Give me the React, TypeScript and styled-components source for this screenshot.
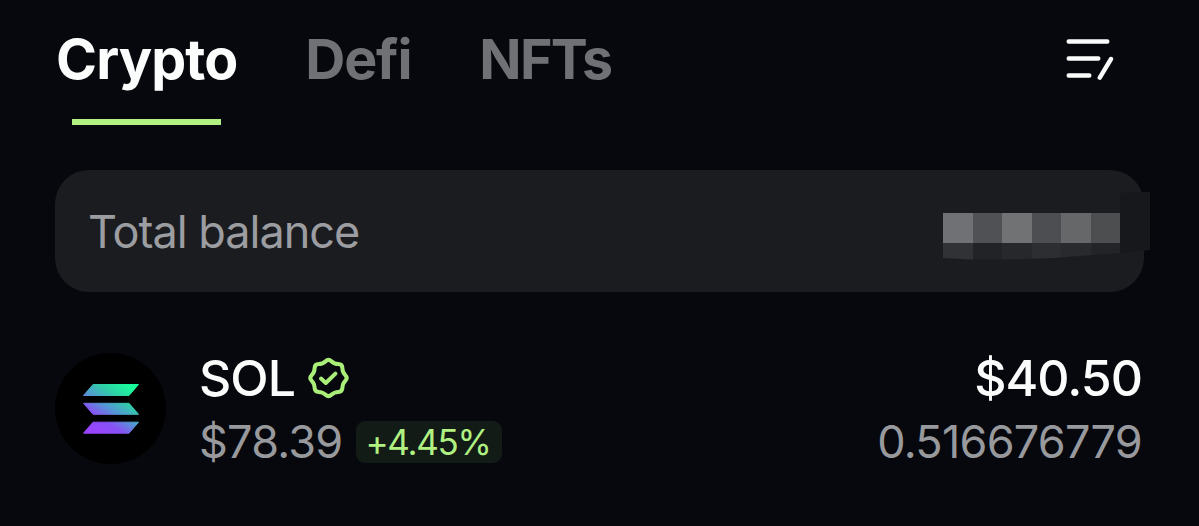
import React from 'react'
import styled, { createGlobalStyle } from 'styled-components'

const GlobalStyle = createGlobalStyle`
    * {
        box-sizing: border-box;
    }

    body {
        margin: 0;
        background-color: #06080d;
        font-family: Inter, sans-serif;
    }
`

const Container = styled.main`
    display: flex;
    flex-flow: column;
    height: 526px;
    padding: 29px 55px 0;
    overflow: hidden;
`

const Header = styled.header`
    display: flex;
    justify-content: space-between;
    height: 96px;
    padding: 0 30px 0 1px;
`

const Tabs = styled.nav`
    display: flex;
    gap: 68px;
`

const Tab = styled.button<{ $active?: boolean; $spacing: number }>`
    display: flex;
    flex-flow: column;
    align-items: center;
    justify-content: space-between;
    padding: 0;
    border: 0;
    background: none;
    color: ${({ $active }) => ($active ? '#fbfcfc' : '#707175')};
    font-family: inherit;
    font-size: 55.5px;
    font-weight: 700;
    line-height: 60px;
    letter-spacing: ${({ $spacing }) => $spacing}px;
    white-space: nowrap;
`

const Underline = styled.span`
    width: 149px;
    height: 6px;
    background-color: #b0f182;
`

const ManageButton = styled.button`
    align-self: flex-start;
    height: 48px;
    margin-top: 6px;
    padding: 0;
    border: 0;
    background: none;
`

const BalanceCard = styled.section`
    position: relative;
    display: flex;
    align-items: center;
    height: 122px;
    margin-top: 45px;
    padding: 0 33px;
    border-radius: 34px;
    background-color: #1b1c20;
`

const BalanceLabel = styled.span`
    padding-top: 2px;
    color: #9c9da1;
    font-size: 45px;
    line-height: 60px;
    letter-spacing: -1px;
`

const HiddenAmount = styled.div`
    position: absolute;
    top: 22px;
    right: -6px;
    display: grid;
    grid-template-columns: repeat(6, 29.5px) 30px;
    grid-template-rows: 21px 30px 17px;
    clip-path: polygon(0 21px, 177px 21px, 177px 1px, 207px 0, 207px 58px, 177px 61px, 110px 66px, 65px 67.5px, 28px 67.5px, 0 66px);
`

const Block = styled.span<{ $color: string; $tall?: boolean }>`
    grid-row: ${({ $tall }) => ($tall ? '1 / 4' : 'auto')};
    grid-column: ${({ $tall }) => ($tall ? '7' : 'auto')};
    background-color: ${({ $color }) => $color};
`

const AssetRow = styled.section`
    display: flex;
    align-items: center;
    height: 128px;
    margin-top: 54px;
`

const Coin = styled.div`
    display: flex;
    align-items: center;
    justify-content: center;
    width: 111px;
    height: 111px;
    margin-top: -3px;
    border-radius: 50%;
    background-color: #000;
`

const Column = styled.div<{ $end?: boolean }>`
    display: flex;
    flex-flow: column;
    align-items: ${({ $end }) => ($end ? 'flex-end' : 'flex-start')};
    margin-left: ${({ $end }) => ($end ? 'auto' : '33px')};
    margin-right: ${({ $end }) => ($end ? '2px' : '0')};
`

const Line = styled.div`
    display: flex;
    align-items: center;
    gap: 13px;
    height: 64px;
`

const Primary = styled.span`
    color: #fbfcfc;
    font-size: 50px;
    font-weight: 500;
    line-height: 64px;
    letter-spacing: -1px;
`

const Secondary = styled.span`
    color: #98999d;
    font-size: 45px;
    line-height: 64px;
    letter-spacing: -0.75px;
`

const Change = styled.span`
    width: 146px;
    height: 42px;
    padding-right: 1px;
    border-radius: 9px;
    background-color: #131b17;
    color: #b0f182;
    font-size: 35px;
    line-height: 42px;
    letter-spacing: -1.3px;
    text-align: center;
`

const blocks = ['#707174', '#505154', '#717274', '#4d4e51', '#666768', '#4d4e50']
const lowerBlocks = ['#313235', '#222327', '#27282b', '#2d2e31', '#292a2d', '#232427']

const ManageIcon = () => (
    <svg width="50" height="48" viewBox="0 0 50 48" fill="none" stroke="#fbfcfc" strokeWidth="4.4" strokeLinecap="round">
        <path d="M4.7 6.5H43.3M4.7 23.5H34.3M4.7 40.5H25.3M47 24L35.8 42.7" />
    </svg>
)

const VerifiedIcon = () => {
    const points = Array.from({ length: 16 }, (_, i) => {
        const radius = i % 2 ? 15.1 : 19.6
        const angle = (i * Math.PI) / 8 - Math.PI / 2
        return [20.5 + radius * Math.cos(angle), 21 + radius * Math.sin(angle)]
    })
    const mid = (i: number) => {
        const [x1, y1] = points[i % 16]
        const [x2, y2] = points[(i + 1) % 16]
        return `${(x1 + x2) / 2} ${(y1 + y2) / 2}`
    }
    const curves = points.map((_, i) => {
        const [x, y] = points[(i + 1) % 16]
        return `Q${x} ${y} ${mid(i + 1)}`
    })

    return (
        <svg width="42" height="42" viewBox="0 0 42 42" fill="none" stroke="#a9ee78" strokeWidth="4" strokeLinejoin="round" strokeLinecap="round">
            <path d={`M${mid(0)}${curves.join('')}Z`} />
            <path d="M13 21.5L17.8 26L27.4 16.6" />
        </svg>
    )
}

const SolanaLogo = () => (
    <svg width="58" height="52" viewBox="0 0 58 52">
        <defs>
            <linearGradient id="solana" gradientUnits="userSpaceOnUse" x1="12" y1="54" x2="48" y2="0">
                <stop offset="0.08" stopColor="#9945ff" />
                <stop offset="0.3" stopColor="#8752f3" />
                <stop offset="0.5" stopColor="#5497d5" />
                <stop offset="0.72" stopColor="#30cda8" />
                <stop offset="0.95" stopColor="#19fb9b" />
            </linearGradient>
        </defs>
        <g fill="url(#solana)" stroke="url(#solana)" strokeLinejoin="round">
            <path d="M11 1.5H56.5L47 12.5H1.5Z" />
            <path d="M1.5 20.3H47L56.5 31.3H11Z" />
            <path d="M11 39.2H56.5L47 50.2H1.5Z" />
        </g>
    </svg>
)

const App = () => {
    return (
        <Container>
            <GlobalStyle />
            <Header>
                <Tabs>
                    <Tab $active $spacing={-0.9}>
                        Crypto
                        <Underline />
                    </Tab>
                    <Tab $spacing={-1.2}>Defi</Tab>
                    <Tab $spacing={-1.7}>NFTs</Tab>
                </Tabs>
                <ManageButton aria-label="Manage">
                    <ManageIcon />
                </ManageButton>
            </Header>
            <BalanceCard>
                <BalanceLabel>Total balance</BalanceLabel>
                <HiddenAmount>
                    <Block $color="#17181b" $tall />
                    {Array.from({ length: 6 }, (_, i) => <Block key={i} $color="transparent" />)}
                    {blocks.map((color, i) => <Block key={i} $color={color} />)}
                    {lowerBlocks.map((color, i) => <Block key={i} $color={color} />)}
                </HiddenAmount>
            </BalanceCard>
            <AssetRow>
                <Coin>
                    <SolanaLogo />
                </Coin>
                <Column>
                    <Line>
                        <Primary>SOL</Primary>
                        <VerifiedIcon />
                    </Line>
                    <Line>
                        <Secondary>$78.39</Secondary>
                        <Change>+4.45%</Change>
                    </Line>
                </Column>
                <Column $end>
                    <Line>
                        <Primary>$40.50</Primary>
                    </Line>
                    <Line>
                        <Secondary>0.516676779</Secondary>
                    </Line>
                </Column>
            </AssetRow>
        </Container>
    )
}

export default App
